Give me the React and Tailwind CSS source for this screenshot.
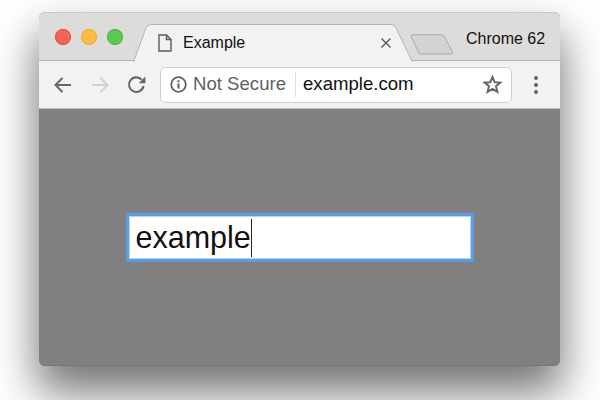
const sans = "font-['Liberation_Sans',Arial,sans-serif]";

function Tab() {
  return (
    <div className="relative ml-[10px] flex h-[37px] w-[280px] shrink-0 items-center pl-[25px] pr-[21px]">
      <svg className="absolute inset-0" width="280" height="38" viewBox="0 0 280 38">
        <path d="M0.5 38 L13 4 Q14.5 0.5 18 0.5 L258 0.5 Q261.5 0.5 263 4 L279.5 38" fill="#f2f2f2" stroke="#b4b2b0" strokeWidth="1" />
      </svg>
      <svg className="relative" width="14" height="18" viewBox="0 0 14 18" fill="none" stroke="#5a5a5a" strokeWidth="1.4">
        <path d="M1 1 H8.5 L13 5.5 V17 H1 Z" />
        <path d="M8.5 1 V5.5 H13" />
      </svg>
      <span className="relative ml-[11px] text-[16px] leading-none text-[#111]">Example</span>
      <svg className="relative ml-auto mr-[1px]" width="10" height="10" viewBox="0 0 10 10" stroke="#555" strokeWidth="1.4">
        <path d="M0.5 0.5 L9.5 9.5 M9.5 0.5 L0.5 9.5" />
      </svg>
    </div>
  );
}

export default function App() {
  return (
    <div className={`h-[400px] w-[600px] overflow-hidden bg-white pl-[39px] pt-[12px] ${sans}`}>
      <div className="flex h-[354px] w-[521px] flex-col overflow-hidden rounded-[6px] border-b border-[#777] bg-[#808080] shadow-[0_24px_44px_2px_rgba(0,0,0,0.55)]">
        <div className="flex h-[49px] shrink-0 items-end border-b border-t border-[#b2b0ae] border-t-[#c9c7c5] bg-[#dedcda] pl-[16px]">
          <div className="mb-[15px] flex gap-[10px]">
            <span className="h-[16px] w-[16px] rounded-full bg-[#f2635a] outline outline-1 -outline-offset-1 outline-[#e0524a]" />
            <span className="h-[16px] w-[16px] rounded-full bg-[#fbbc44] outline outline-1 -outline-offset-1 outline-[#e9ab3a]" />
            <span className="h-[16px] w-[16px] rounded-full bg-[#5ec852] outline outline-1 -outline-offset-1 outline-[#50b746]" />
          </div>
          <div className="-mb-px">
            <Tab />
          </div>
          <svg className="-ml-[3px] mb-[5px] shrink-0" width="44" height="21" viewBox="0 0 44 21">
            <path d="M1 2.5 Q0.6 0.8 2.5 0.8 L32 0.8 Q33.5 0.8 34 2 L42.5 18 Q43.2 20 41 20 L11 20 Q9.5 20 9 19 Z" fill="#d4d3d1" stroke="#a9a8a6" strokeWidth="1" />
          </svg>
          <span className="mb-[12px] ml-[12px] text-[16px] leading-[18px] text-[#111]">Chrome 62</span>
        </div>
        <div className="flex h-[48px] shrink-0 items-center border-b border-[#b8b8b8] bg-[#f2f2f2] pl-[15px]">
          <svg width="18" height="18" viewBox="0 0 18 18" fill="none" stroke="#666" strokeWidth="2">
            <path d="M17 9 H1.5 M8.5 2 L1.5 9 L8.5 16" />
          </svg>
          <svg className="ml-[19px]" width="18" height="18" viewBox="0 0 18 18" fill="none" stroke="#d2d2d2" strokeWidth="2">
            <path d="M1 9 H16.5 M9.5 2 L16.5 9 L9.5 16" />
          </svg>
          <svg className="ml-[18px]" width="20" height="20" viewBox="0 0 20 20" fill="none">
            <path d="M16.5 11 A7.3 7.3 0 1 1 14.6 4.6" stroke="#666" strokeWidth="2.1" />
            <path d="M18.4 1.5 V8.3 H11.6 Z" fill="#666" />
          </svg>
          <div className="ml-[13px] flex h-[36px] w-[352px] items-center rounded-[5px] border border-[#cfcfcf] bg-white pl-[9px] pr-[9px]">
            <svg width="17" height="17" viewBox="0 0 17 17" fill="none">
              <circle cx="8.5" cy="8.5" r="7.3" stroke="#606060" strokeWidth="1.8" />
              <rect x="7.5" y="7.4" width="2" height="5.2" fill="#606060" />
              <rect x="7.5" y="4.2" width="2" height="2" fill="#606060" />
            </svg>
            <span className="ml-[6px] text-[18.6px] leading-none text-[#5f5f5f]">Not Secure</span>
            <span className="ml-[9px] h-[25px] w-px bg-[#dcdcdc]" />
            <span className="ml-[7px] text-[18.6px] leading-none text-[#111]">example.com</span>
            <svg className="ml-auto" width="19" height="19" viewBox="0 0 19 19" fill="none" stroke="#666" strokeWidth="2" strokeLinejoin="miter">
              <path d="M9.5 2 L11.7 7.2 L17.4 7.6 L13 11.2 L14.4 16.8 L9.5 13.8 L4.6 16.8 L6 11.2 L1.6 7.6 L7.3 7.2 Z" />
            </svg>
          </div>
          <svg className="ml-[21px]" width="6" height="20" viewBox="0 0 6 20" fill="#666">
            <circle cx="3" cy="3" r="2" />
            <circle cx="3" cy="10" r="2" />
            <circle cx="3" cy="17" r="2" />
          </svg>
        </div>
        <div className="flex flex-1 items-start justify-center pt-[104px]">
          <div className="box-border flex h-[49px] w-[348px] items-center border-[3px] border-[#5b9be8] bg-white pl-[7px] outline-1 -outline-offset-4 outline-[#b9d3f3]">
            <span className="text-[30.5px] leading-none text-[#111]">example</span>
            <span className="h-[38px] w-px bg-[#222]" />
          </div>
        </div>
      </div>
    </div>
  );
}
